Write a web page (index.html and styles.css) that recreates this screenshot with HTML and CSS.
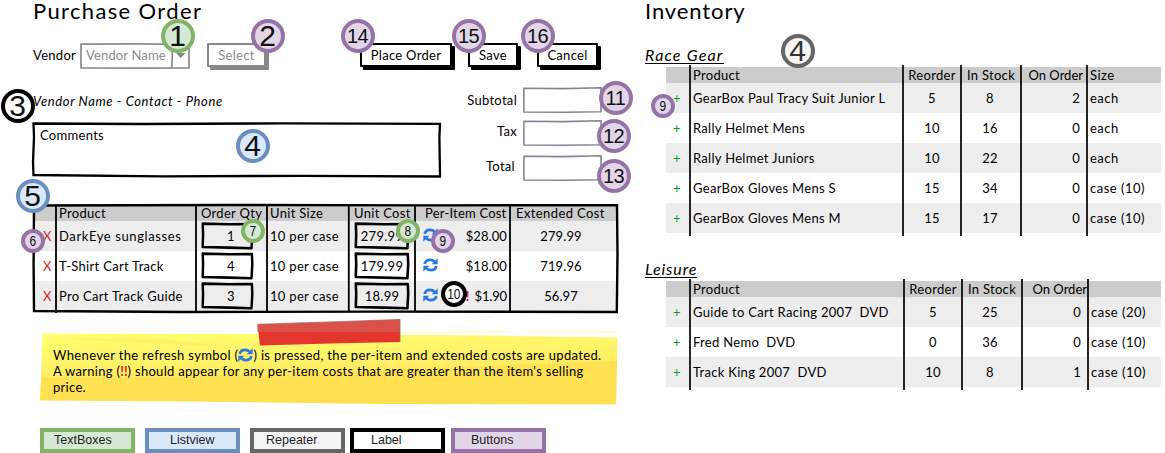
FILE: index.html
```html
<!DOCTYPE html>
<html lang="en">
<head>
<meta charset="utf-8">
<title>Purchase Order</title>
<link rel="stylesheet" href="styles.css">
</head>
<body>
<svg class="defs" aria-hidden="true">
  <symbol id="refresh" viewBox="0 0 16 15">
    <path d="M1.700 6.300C2.400 3.300 4.800 1.900 7.700 1.900c2 0 3.400.7 4.700 2.100M14.300 8.700c-.7 3-3.100 4.400-6 4.400-2 0-3.400-.7-4.700-2.100" fill="none" stroke="#2b78e4" stroke-width="2.900"/>
    <path d="M15.700.3v6.300H9.300zM.3 14.700V8.400h6.400z" fill="#2b78e4"/>
  </symbol>
  <symbol id="field" viewBox="0 0 56 28" preserveAspectRatio="none">
    <path d="M1.800 1.600L30 2.300 53.800 2 54.200 12 53.400 26.200 30 25.600 1.800 25 2.200 12z" fill="none" stroke="#000" stroke-width="2.600" stroke-linejoin="round"/>
  </symbol>
  <symbol id="amount" viewBox="0 0 79 26" preserveAspectRatio="none">
    <path d="M1 1.300L40 1.600 78 .8V24.800L40 25.200 1 25 .8 12z" fill="none" stroke="#86858f" stroke-width="1.600"/>
  </symbol>
</svg>
<div class="page">
  <main class="order">
    <h1>Purchase Order</h1>
    <div class="toolbar">
      <span class="vendor-label">Vendor</span>
      <div class="combo"><span>Vendor Name</span>
        <svg class="overlay" viewBox="0 0 110 26" preserveAspectRatio="none"><path d="M1 1.200L60 .8 109 1.500V25L60 25.200 1 25zM91.500 1L92.300 12 91.800 25" fill="none" stroke="#8a8a8a" stroke-width="1.700"/><path d="M96 10h9.500l-4.700 5z" fill="#888"/></svg>
      </div>
      <div class="btn select">Select</div>
      <div class="btn place">Place Order</div>
      <div class="btn save">Save</div>
      <div class="btn cancel">Cancel</div>
    </div>
    <div class="details">
      <div class="left">
        <p class="contact">Vendor Name - Contact - Phone</p>
        <div class="comments">Comments
          <svg class="overlay" viewBox="0 0 410 56" preserveAspectRatio="none"><path d="M1.500 1.500L110 2 250 1.400 408 1.800 407.400 15 408 54.500 270 53.800 130 54.400 1.500 53 1 40 2 15z" fill="none" stroke="#000" stroke-width="2.300"/></svg>
        </div>
      </div>
      <div class="totals">
        <div class="total"><span>Subtotal</span><svg><use href="#amount"/></svg></div>
        <div class="total"><span>Tax</span><svg><use href="#amount"/></svg></div>
        <div class="total last"><span>Total</span><svg><use href="#amount"/></svg></div>
      </div>
    </div>
    <div class="lines">
      <div class="row head"><span></span><span>Product</span><span class="h-qty">Order Qty</span><span>Unit Size</span><span class="h-cost">Unit Cost</span><span class="h-item">Per-Item Cost</span><span class="h-ext">Extended Cost</span></div>
      <div class="row odd"><span class="del">X</span><span class="wide">DarkEye sunglasses</span><span class="field qty"><svg><use href="#field"/></svg>1</span><span>10 per case</span><span class="field cost"><svg><use href="#field"/></svg>279.99</span><span class="item"><svg class="refresh"><use href="#refresh"/></svg><span>$28.00</span></span><span class="ext">279.99</span></div>
      <div class="row"><span class="del">X</span><span>T-Shirt Cart Track</span><span class="field qty"><svg><use href="#field"/></svg>4</span><span>10 per case</span><span class="field cost"><svg><use href="#field"/></svg>179.99</span><span class="item"><svg class="refresh"><use href="#refresh"/></svg><span>$18.00</span></span><span class="ext">719.96</span></div>
      <div class="row odd"><span class="del">X</span><span>Pro Cart Track Guide</span><span class="field qty"><svg><use href="#field"/></svg>3</span><span>10 per case</span><span class="field cost"><svg><use href="#field"/></svg>18.99</span><span class="item"><svg class="refresh"><use href="#refresh"/></svg><span class="low"><b class="warn">!!</b> $1.90</span></span><span class="ext">56.97</span></div>
      <svg class="overlay" viewBox="0 0 585 109" preserveAspectRatio="none"><path d="M1 1.500L200 1 400 1.400 584 1.200 584.500 50 583.800 108 350 107.600 150 108 1 107 .6 60z" fill="none" stroke="#000" stroke-width="2.400"/><path d="M23 1V109M163 1V108M234 1V108M315.800 1V108M382 1V108M477 1V108" stroke="#000" stroke-width="1.800"/></svg>
    </div>
    <div class="note">
      <svg class="note-art" viewBox="0 0 580 90">
        <defs>
          <linearGradient id="paper" x1="0" y1="0" x2=".25" y2="1"><stop offset="0" stop-color="#ffff70"/><stop offset=".5" stop-color="#fff066"/><stop offset=".75" stop-color="#ffe65a"/><stop offset="1" stop-color="#ffe354"/></linearGradient>
        </defs>
        <path d="M2.500 15.500L220 16 440 17.500 577.500 19.500 576 86.500 350 86 150 83.500 0 82.500 1 58z" fill="url(#paper)"/>
        <path d="M2 60L130 59 300 54 577 43 576 86 350 86 150 83 0 82z" fill="#ffdf50" opacity=".75"/>
        <path d="M20 20L120 21 200 29 80 24z" fill="#ffec68" opacity=".7"/>
        <path d="M320 14.500L470 14M485 14H575" stroke="#ffffa0"/>
        <path d="M217.500 6.500L300 4 360 1.500V24L290 25.500 220 27.500z" fill="#e4352c"/>
        <path d="M217.500 6.500L300 4 360 1.500V14L217.500 14z" fill="#da5149"/>
        <path d="M217.500 6.300L360 1.500V24" fill="none" stroke="#a06864" stroke-width=".8"/>
      </svg>
      <p><span class="n1">Whenever the refresh symbol (<svg class="refresh"><use href="#refresh"/></svg>) is pressed, the per-item and extended costs are updated.</span><br><span>A warning (<b class="warn">!!</b>) should appear for any per-item costs that are greater than the item's selling</span><br>price.</p>
    </div>
    <div class="legend">
      <div class="key green">TextBoxes</div>
      <div class="key blue k2">Listview</div>
      <div class="key gray k3">Repeater</div>
      <div class="key black k4">Label</div>
      <div class="key purple k5">Buttons</div>
    </div>
  </main>
  <section class="inventory">
    <h1>Inventory</h1>
    <h2 class="race-title">Race Gear</h2>
    <div class="stock">
      <div class="srow head"><span></span><span>Product</span><span>Reorder</span><span>In Stock</span><span>On Order</span><span>Size</span></div>
      <div class="srow odd"><span class="add">+</span><span>GearBox Paul Tracy Suit Junior L</span><span>5</span><span>8</span><span>2</span><span>each</span></div>
      <div class="srow"><span class="add">+</span><span>Rally Helmet Mens</span><span>10</span><span>16</span><span>0</span><span>each</span></div>
      <div class="srow odd"><span class="add">+</span><span>Rally Helmet Juniors</span><span>10</span><span>22</span><span>0</span><span>each</span></div>
      <div class="srow"><span class="add">+</span><span>GearBox Gloves Mens S</span><span>15</span><span>34</span><span>0</span><span>case (10)</span></div>
      <div class="srow odd"><span class="add">+</span><span>GearBox Gloves Mens M</span><span>15</span><span>17</span><span>0</span><span>case (10)</span></div>
      <svg class="rules race" viewBox="0 0 495 171"><path d="M24 0V171M237 0V171M295 0V171M355 0V171M421 0V171" stroke="#000" stroke-width="1.700"/></svg>
    </div>
    <h2 class="leisure-title">Leisure</h2>
    <div class="stock leisure">
      <div class="srow head"><span></span><span>Product</span><span>Reorder</span><span>In Stock</span><span>On Order</span><span></span></div>
      <div class="srow odd"><span class="add">+</span><span>Guide to Cart Racing 2007&nbsp; DVD</span><span>5</span><span>25</span><span>0</span><span>case (20)</span></div>
      <div class="srow"><span class="add">+</span><span>Fred Nemo&nbsp; DVD</span><span>0</span><span>36</span><span>0</span><span>case (10)</span></div>
      <div class="srow odd"><span class="add">+</span><span>Track King 2007&nbsp; DVD</span><span>10</span><span>8</span><span>1</span><span>case (10)</span></div>
      <svg class="rules leis" viewBox="0 0 495 111"><path d="M24 0V111M238 0V111M296 0V111M356 0V111M422 0V111" stroke="#000" stroke-width="1.700"/></svg>
    </div>
  </section>
  <i class="badge big green b1">1</i>
  <i class="badge big purple b2">2</i>
  <i class="badge big black b3">3</i>
  <i class="badge big blue b4">4</i>
  <i class="badge big blue b5">5</i>
  <i class="badge big gray b4r">4</i>
  <i class="badge mid purple b14">14</i>
  <i class="badge mid purple b15">15</i>
  <i class="badge mid purple b16">16</i>
  <i class="badge mid purple b11">11</i>
  <i class="badge mid purple b12">12</i>
  <i class="badge mid purple b13">13</i>
  <i class="badge small purple b6"><span>6</span></i>
  <i class="badge small green b7"><span>7</span></i>
  <i class="badge small green b8"><span>8</span></i>
  <i class="badge small purple b9"><span>9</span></i>
  <i class="badge small black b10"><span>10</span></i>
  <i class="badge small purple b9r"><span>9</span></i>
</div>
</body>
</html>
```
FILE: styles.css
```css
* { box-sizing: border-box; }
body { margin: 0; background: #fff; color: #000; font: 13px/16px Lato, sans-serif; letter-spacing: 0.3px; }
h1, h2, p { margin: 0; font-weight: 400; }
.defs { position: absolute; width: 0; height: 0; }
.page { position: relative; width: 1165px; height: 453px; overflow: hidden; display: grid; grid-template-columns: 645px 520px; }
.overlay { position: absolute; inset: 0; width: 100%; height: 100%; overflow: visible; }
h1 { font-size: 22px; line-height: 20px; height: 43px; letter-spacing: 1.350px; padding-top: 1px; }
.order { padding-left: 33px; }
.inventory h1 { letter-spacing: 0.900px; }

.toolbar { display: flex; height: 44px; align-items: flex-start; line-height: 24px; }
.vendor-label { width: 47px; }
.combo { position: relative; width: 110px; height: 26px; padding-left: 6px; color: #8c8c8c; letter-spacing: 0.150px; }
.btn { height: 24px; border: 2px solid #000; box-shadow: 3px 3px 0 #000; border-radius: 1px; line-height: 20px; text-align: center; white-space: nowrap; }
.select { width: 59px; margin-left: 17px; color: #8c8c8c; border-color: #888; box-shadow: 3px 3px 0 #888; }
.place { width: 92px; margin-left: 94px; }
.save { width: 50px; margin-left: 16px; }
.cancel { width: 61px; margin-left: 19px; }

.details { display: flex; height: 117px; }
.left { width: 409px; }
.contact { font-style: italic; padding-top: 6px; height: 35px; letter-spacing: 0.620px; }
.comments { position: relative; width: 410px; height: 56px; margin-left: -1px; padding: 5px 8px; }
.totals { width: 160px; display: flex; flex-direction: column; gap: 8px; }
.total { display: flex; justify-content: flex-end; gap: 6px; height: 25px; line-height: 25px; }
.total svg { width: 79px; height: 26px; }
.total span { padding-top: 1px; }
.total:nth-child(2) span { padding-top: 0; margin-top: -1px; }
.total.last { margin-top: 2px; }
.total.last span { margin-top: -2px; padding-right: 2px; }

.lines { position: relative; width: 585px; height: 109px; padding-top: 2px; }
.row { display: grid; grid-template-columns: 23px 140px 71px 82px 66px 95px 108px; height: 30px; line-height: 30px; white-space: nowrap; }
.row > span { padding-left: 3px; }
.row > .wide { letter-spacing: 0.600px; }
.head { background: #ccc; }
.row.head { height: 15px; line-height: 15px; }
.odd { background: #ededed; }
.row .del { color: #e01b24; padding: 0 0 0 10px; }
.row .h-qty { padding-left: 5px; }
.row .h-cost { padding-left: 5px; }
.row .h-item { padding-left: 10px; letter-spacing: 0.200px; }
.row .h-ext { padding-left: 6px; letter-spacing: 0.400px; }
.row .field { position: relative; z-index: 0; padding: 0; text-align: center; }
.field svg { position: absolute; z-index: -1; left: 5px; top: 1px; width: 53px; height: 28px; }
.row .qty { padding-right: 1px; }
.row .cost svg { width: 56px; left: 5px; }
.row .item { display: flex; justify-content: space-between; padding: 0 3px 0 8px; letter-spacing: 0.100px; }
.refresh { width: 15px; height: 14px; }
.item .refresh { margin-top: 7px; }
.item .low { letter-spacing: -0.150px; }
.item .warn { font-weight: 700; margin-right: 2px; }
.row .ext { text-align: center; padding: 0 6px 0 0; letter-spacing: 0.100px; }
.warn { color: #d0202a; font-weight: 700; letter-spacing: 0; }

.note { position: relative; height: 102px; margin-left: 7px; padding: 34px 0 0 13px; z-index: 0; }
.note-art { position: absolute; z-index: -1; left: 0; top: 5px; width: 580px; height: 90px; }
.note p { white-space: nowrap; letter-spacing: 0.300px; }
.note .n1 { letter-spacing: 0.340px; }
.note .refresh { vertical-align: -2px; margin: -3px 0 0; }

.legend { display: flex; margin: 13px 0 0 7px; font: 12.500px/16px "Liberation Sans", sans-serif; letter-spacing: 0; }
.key { width: 95px; height: 25px; border: 4px solid; padding-left: 10px; color: #222; }
.k2 { margin-left: 10px; padding-left: 21px; }
.k3 { margin-left: 10px; padding-left: 12px; }
.k4 { margin-left: 5px; padding-left: 17px; }
.k5 { margin-left: 6px; padding-left: 16px; }

.green { background: #d5e8d4; border-color: #82b366; }
.blue { background: #dae8fc; border-color: #6c8ebf; }
.gray { background: #f5f5f5; border-color: #666; }
.black { background: #fff; border-color: #000; }
.purple { background: #e1d5e7; border-color: #9673a6; }

h2 { font-size: 16px; line-height: 15px; font-style: italic; border-bottom: 1px solid #000; width: max-content; letter-spacing: 1.200px; }
.race-title { margin: 4px 0 3px; height: 17px; }
.leisure-title { margin: 28px 0 3px; height: 17px; letter-spacing: 0.900px; }
.stock { position: relative; width: 495px; margin-left: 21px; }
.srow { display: grid; grid-template-columns: 24px 213px 58px 60px 66px 74px; height: 30px; line-height: 30px; white-space: nowrap; }
.srow.head { height: 16px; line-height: 16px; }
.srow span { padding-left: 3px; }
.srow span:nth-child(3), .srow span:nth-child(4) { text-align: center; padding-left: 0; }
.srow:not(.head) span:nth-child(4) { padding-right: 2px; }
.leisure .srow:not(.head) span:nth-child(4) { padding-right: 4px; }
.srow span:nth-child(5) { text-align: right; padding-right: 7px; }
.srow.head span:nth-child(5) { padding-right: 4px; letter-spacing: 0; }
.leisure .srow { grid-template-columns: 24px 214px 58px 60px 66px 73px; }
.leisure .srow.head span:nth-child(5) { padding-right: 1px; }
.srow span:nth-child(6) { letter-spacing: 0.500px; }
.srow .add { color: #0a9a1e; padding-left: 7px; }
.rules { position: absolute; left: 0; top: -2px; width: 495px; }
.race { height: 171px; }
.leis { height: 111px; }

.badge { position: absolute; display: flex; align-items: center; justify-content: center; transform: translate(-50%, -50%); border-style: solid; border-width: 4px; border-radius: 50%; font-family: "Liberation Sans", sans-serif; font-style: normal; letter-spacing: 0; color: #111; }
.big { width: 34px; height: 34px; font-size: 30px; }
.mid { width: 34px; height: 34px; font-size: 20px; letter-spacing: -0.500px; }
.small { width: 24px; height: 24px; font-size: 14px; }
.small span { transform: scaleX(0.850); }
.b1 { left: 177.500px; top: 35.500px; }
.b2 { left: 267.500px; top: 35.500px; }
.b3 { left: 17.500px; top: 105.500px; }
.b4 { left: 252.500px; top: 145.500px; }
.b5 { left: 32.500px; top: 195.500px; }
.b4r { left: 797.500px; top: 50.500px; color: #333; }
.b14 { left: 357.500px; top: 35.500px; }
.b15 { left: 468.500px; top: 35.500px; }
.b16 { left: 537.500px; top: 35.500px; }
.b11 { left: 615.500px; top: 97.500px; }
.b12 { left: 613.500px; top: 135.500px; }
.b13 { left: 613.500px; top: 175.500px; }
.b6 { left: 32.500px; top: 240.500px; }
.b7 { left: 252.500px; top: 230.500px; }
.b8 { left: 407.500px; top: 230.500px; }
.b9 { left: 442.500px; top: 240.500px; }
.b10 { left: 453.500px; top: 293.500px; width: 26px; height: 26px; }
.b9r { left: 662.500px; top: 105.500px; }
```
